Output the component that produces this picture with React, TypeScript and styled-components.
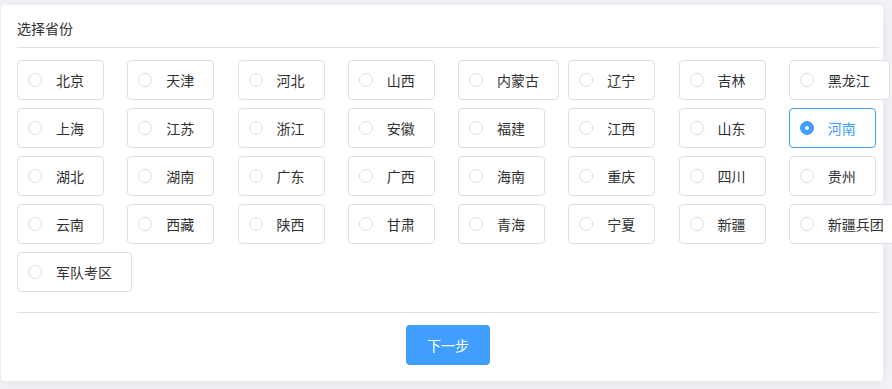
import React, { useState } from "react";
import styled, { createGlobalStyle } from "styled-components";

const Global = createGlobalStyle`
  html, body {
    margin: 0;
    padding: 0;
    background: #f0f2f5;
    font-family: "Noto Sans CJK SC", "Noto Sans", "Liberation Sans", sans-serif;
  }
  * { box-sizing: border-box; }
`;

const Page = styled.div`
  width: 892px;
  height: 389px;
  padding: 5px 0 0 1px;
  overflow: hidden;
`;

const Card = styled.div`
  width: 882px;
  height: 376px;
  background: #ffffff;
  border-radius: 4px;
  box-shadow: 0 2px 12px 0 rgba(0, 0, 0, 0.06);
  padding: 12px 4px 16px 16px;
  display: flex;
  flex-direction: column;
`;

const Title = styled.div`
  font-size: 14px;
  line-height: 22px;
  color: #303133;
  padding-bottom: 8px;
  border-bottom: 1px solid #dcdfe6;
`;

const Grid = styled.div`
  margin-top: 12px;
  width: 882px;
  display: grid;
  grid-template-columns: repeat(8, minmax(0, 1fr));
  row-gap: 8px;
`;

const Option = styled.label<{ $active: boolean }>`
  justify-self: start;
  height: 40px;
  display: inline-flex;
  align-items: center;
  padding: 0 19px 0 10px;
  border: 1px solid ${(p) => (p.$active ? "#409eff" : "#dcdfe6")};
  border-radius: 4px;
  background: #fff;
  cursor: pointer;
  white-space: nowrap;
  color: ${(p) => (p.$active ? "#409eff" : "#303133")};
  font-size: 14px;
`;

const Circle = styled.span<{ $active: boolean }>`
  width: 14px;
  height: 14px;
  border-radius: 50%;
  border: 1px solid ${(p) => (p.$active ? "#409eff" : "#dcdfe6")};
  background: ${(p) => (p.$active ? "#409eff" : "#fff")};
  display: inline-flex;
  align-items: center;
  justify-content: center;
  flex: none;
  &::after {
    content: "";
    width: 4px;
    height: 4px;
    border-radius: 50%;
    background: #fff;
    display: ${(p) => (p.$active ? "block" : "none")};
  }
`;

const Label = styled.span`
  padding-left: 14px;
  line-height: 20px;
`;

const Divider = styled.div`
  margin-top: 20px;
  border-top: 1px solid #dcdfe6;
`;

const Footer = styled.div`
  display: flex;
  justify-content: center;
  padding-top: 12px;
`;

const Button = styled.button`
  width: 84px;
  height: 40px;
  border: none;
  border-radius: 4px;
  background: #409eff;
  color: #fff;
  font-family: inherit;
  font-size: 14px;
  cursor: pointer;
`;

const provinces = [
  "北京", "天津", "河北", "山西", "内蒙古", "辽宁", "吉林", "黑龙江",
  "上海", "江苏", "浙江", "安徽", "福建", "江西", "山东", "河南",
  "湖北", "湖南", "广东", "广西", "海南", "重庆", "四川", "贵州",
  "云南", "西藏", "陕西", "甘肃", "青海", "宁夏", "新疆", "新疆兵团",
  "军队考区",
];

export default function App() {
  const [selected, setSelected] = useState("河南");
  return (
    <>
      <Global />
      <Page>
        <Card>
          <Title>选择省份</Title>
          <Grid>
            {provinces.map((p) => (
              <Option key={p} $active={p === selected} onClick={() => setSelected(p)}>
                <Circle $active={p === selected} />
                <Label>{p}</Label>
              </Option>
            ))}
          </Grid>
          <Divider />
          <Footer>
            <Button>下一步</Button>
          </Footer>
        </Card>
      </Page>
    </>
  );
}
